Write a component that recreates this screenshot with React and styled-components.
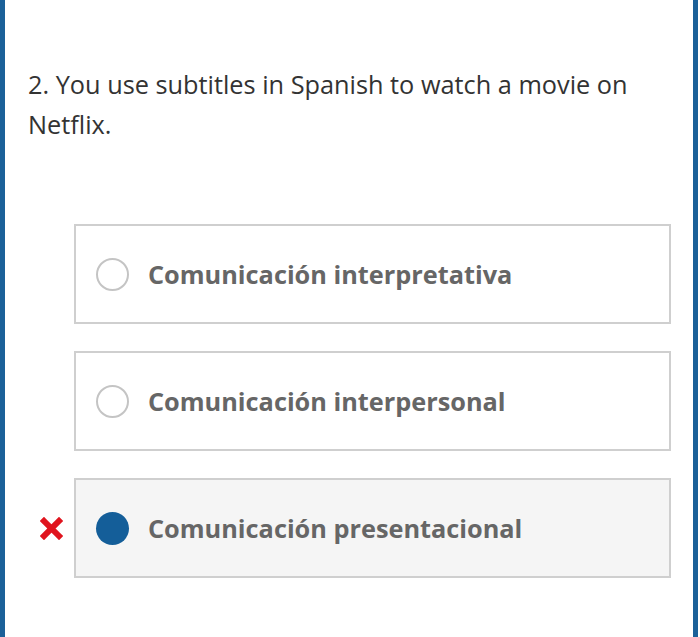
import React from "react";
import styled, { createGlobalStyle } from "styled-components";

const GlobalStyle = createGlobalStyle`
  html, body {
    margin: 0;
    padding: 0;
    background: #fff;
  }
  body {
    font-family: "Open Sans", "Noto Sans", "Liberation Sans", sans-serif;
  }
`;

const options = [
  { id: "a", label: "Comunicación interpretativa", selected: false, wrong: false },
  { id: "b", label: "Comunicación interpersonal", selected: false, wrong: false },
  { id: "c", label: "Comunicación presentacional", selected: true, wrong: true },
];

const App = () => {
  return (
    <>
      <GlobalStyle />
      <Frame>
        <Question>2. You use subtitles in Spanish to watch a movie on Netflix.</Question>
        <OptionList>
          {options.map((opt) => (
            <Row key={opt.id}>
              <Mark>{opt.wrong && <CrossIcon />}</Mark>
              <OptionBox selected={opt.selected}>
                <Radio selected={opt.selected} />
                <Label>{opt.label}</Label>
              </OptionBox>
            </Row>
          ))}
        </OptionList>
      </Frame>
    </>
  );
};

const CrossIcon = () => (
  <svg width="23" height="23" viewBox="0 0 23 23">
    <path
      d="M4 4 L19 19 M19 4 L4 19"
      stroke="#e0141e"
      strokeWidth="6"
      strokeLinecap="square"
    />
  </svg>
);

export default App;

const Frame = styled.div`
  box-sizing: border-box;
  width: 698px;
  height: 637px;
  border-left: 5px solid #1b6199;
  border-right: 5px solid #1b6199;
  padding-top: 64px;
  overflow: hidden;
`;

const Question = styled.p`
  margin: 0 22px 0 23px;
  font-size: 25.3px;
  line-height: 40px;
  color: #333;
  font-weight: 400;
`;

const OptionList = styled.div`
  margin-top: 80px;
  display: flex;
  flex-direction: column;
  gap: 27px;
`;

const Row = styled.div`
  display: grid;
  grid-template-columns: 69px 597px;
`;

const Mark = styled.div`
  display: flex;
  align-items: center;
  justify-content: flex-end;
  padding-right: 11px;
`;

const OptionBox = styled.div`
  box-sizing: border-box;
  height: 100px;
  display: flex;
  align-items: center;
  gap: 19px;
  padding-left: 20px;
  border: 2px solid #cfcfcf;
  background: ${({ selected }) => (selected ? "#f5f5f5" : "#fff")};
`;

const Radio = styled.span`
  box-sizing: border-box;
  width: 33px;
  height: 33px;
  border-radius: 50%;
  flex-shrink: 0;
  border: ${({ selected }) => (selected ? "none" : "2px solid #c4c4c4")};
  background: ${({ selected }) => (selected ? "#145e99" : "#fff")};
`;

const Label = styled.span`
  font-size: 25.3px;
  font-weight: 700;
  color: #666;
`;
